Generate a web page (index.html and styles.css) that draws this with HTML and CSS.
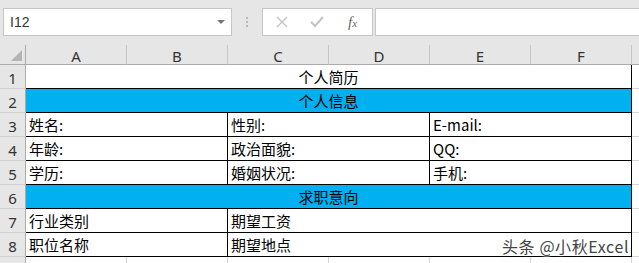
FILE: index.html
```html
<!DOCTYPE html>
<html lang="zh-CN">
<head>
    <meta charset="UTF-8">
    <meta name="viewport" content="width=device-width, initial-scale=1.0">
    <title>个人简历</title>
    <link rel="stylesheet" href="styles.css">
</head>
<body>
    <div class="toolbar">
        <div class="name-box">
            <span>I12</span>
            <span class="drop"></span>
        </div>
        <div class="grip">
            <svg width="3" height="11" viewBox="0 0 3 11"><rect x="0" y="0" width="2" height="2" fill="#b8b8b8"/><rect x="0" y="4" width="2" height="2" fill="#b8b8b8"/><rect x="0" y="8" width="2" height="2" fill="#b8b8b8"/></svg>
        </div>
        <div class="fx-buttons">
            <svg class="btn-icon" width="12" height="12" viewBox="0 0 12 12"><path d="M1 1 L11 11 M11 1 L1 11" stroke="#c4c4c4" stroke-width="1.4" fill="none"/></svg>
            <svg class="btn-icon" width="14" height="12" viewBox="0 0 14 12"><path d="M1 6 L5 10 L13 1" stroke="#c4c4c4" stroke-width="2.2" fill="none"/></svg>
            <span class="fx">f<sub>x</sub></span>
        </div>
        <div class="formula"></div>
    </div>

    <div class="sheet">
        <!-- column headers -->
        <div class="corner"><span class="tri"></span></div>
        <div class="col-head">A</div>
        <div class="col-head">B</div>
        <div class="col-head">C</div>
        <div class="col-head">D</div>
        <div class="col-head">E</div>
        <div class="col-head">F</div>
        <div class="col-head rest"></div>

        <div class="row-head">1</div>
        <div class="cell title span6">个人简历</div>
        <div class="cell rest"></div>

        <div class="row-head">2</div>
        <div class="cell band span6">个人信息</div>
        <div class="cell rest"></div>

        <div class="row-head">3</div>
        <div class="cell box span2">姓名:</div>
        <div class="cell box span2">性别:</div>
        <div class="cell box span2">E-mail:</div>
        <div class="cell rest"></div>

        <div class="row-head">4</div>
        <div class="cell box span2">年龄:</div>
        <div class="cell box span2">政治面貌:</div>
        <div class="cell box span2">QQ:</div>
        <div class="cell rest"></div>

        <div class="row-head">5</div>
        <div class="cell box span2">学历:</div>
        <div class="cell box span2">婚姻状况:</div>
        <div class="cell box span2">手机:</div>
        <div class="cell rest"></div>

        <div class="row-head">6</div>
        <div class="cell band span6">求职意向</div>
        <div class="cell rest"></div>

        <div class="row-head">7</div>
        <div class="cell box span2">行业类别</div>
        <div class="cell box span4">期望工资</div>
        <div class="cell rest"></div>

        <div class="row-head">8</div>
        <div class="cell box span2">职位名称</div>
        <div class="cell box span4">期望地点</div>
        <div class="cell rest"></div>

        <div class="row-head last">9</div>
        <div class="cell"></div>
        <div class="cell"></div>
        <div class="cell"></div>
        <div class="cell"></div>
        <div class="cell"></div>
        <div class="cell"></div>
        <div class="cell rest"></div>

        <div class="watermark">头条 @小秋Excel</div>
    </div>
</body>
</html>
```

FILE: styles.css
```css
body {
    margin: 0;
    background-color: #e6e6e6;
    font-family: "Noto Sans CJK SC", "Noto Sans", sans-serif;
    overflow: hidden;
}

/* Formula bar */
.toolbar {
    display: flex;
    height: 45px;
    padding: 8px 0 0 3px;
    box-sizing: border-box;
}
.name-box {
    width: 229px;
    height: 28px;
    box-sizing: border-box;
    background-color: #fff;
    border: 1px solid #c6c6c6;
    display: flex;
    align-items: center;
    justify-content: space-between;
    padding: 0 6px 0 6px;
    font-family: "Liberation Sans", sans-serif;
    font-size: 14px;
    color: #333;
}
.drop {
    width: 0;
    height: 0;
    border-left: 4px solid transparent;
    border-right: 4px solid transparent;
    border-top: 4px solid #777;
}
.grip {
    width: 30px;
    height: 28px;
    display: flex;
    align-items: center;
    justify-content: center;
}
.fx-buttons {
    width: 111px;
    height: 28px;
    box-sizing: border-box;
    background-color: #fff;
    border: 1px solid #c6c6c6;
    display: flex;
    align-items: center;
    gap: 22px;
    padding-left: 13px;
}
.fx {
    font-family: "Liberation Serif", serif;
    font-style: italic;
    font-size: 15px;
    color: #666;
    margin-left: 2px;
}
.fx sub {
    font-size: 11px;
    vertical-align: 0;
}
.formula {
    flex: 1;
    height: 28px;
    margin-left: 2px;
    box-sizing: border-box;
    background-color: #fff;
    border: 1px solid #c6c6c6;
    border-right: none;
}

/* Worksheet */
.sheet {
    position: relative;
    display: grid;
    grid-template-columns: 26px repeat(6, 101px) 1fr;
    grid-template-rows: 20px repeat(8, 24px) 7px;
    background-color: #fff;
    overflow: hidden;
}
.sheet > div {
    box-sizing: border-box;
}
.corner {
    background-color: #e6e6e6;
    border-right: 1px solid #ababab;
    border-bottom: 1px solid #ababab;
    position: relative;
}
.tri {
    position: absolute;
    right: 3px;
    bottom: 3px;
    width: 0;
    height: 0;
    border-left: 11px solid transparent;
    border-bottom: 11px solid #b4b4b4;
}
.col-head {
    background-color: #e6e6e6;
    border-right: 1px solid #c6c6c6;
    border-bottom: 1px solid #ababab;
    text-align: center;
    font-family: "Noto Sans", sans-serif;
    font-size: 15px;
    line-height: 23px;
    color: #333;
}
.col-head.rest {
    border-right: none;
}
.row-head {
    background-color: #e6e6e6;
    border-right: 1px solid #ababab;
    border-bottom: 1px solid #d0d0d0;
    text-align: center;
    font-family: "Noto Sans", sans-serif;
    font-size: 15px;
    line-height: 27px;
    color: #333;
}
.row-head.last {
    border-bottom: none;
}
.cell {
    border-right: 1px solid #d4d4d4;
    border-bottom: 1px solid #d4d4d4;
    font-size: 15px;
    line-height: 23px;
    padding-left: 3px;
    color: #000;
    white-space: nowrap;
}
.cell.rest {
    border-right: none;
}
.span2 { grid-column: span 2; }
.span4 { grid-column: span 4; }
.span6 { grid-column: span 6; }

.title,
.band {
    text-align: center;
    padding-left: 0;
    border-right-color: #000;
    border-bottom-color: #000;
}
.band {
    background-color: #00b0f0;
}
.box {
    border-right-color: #000;
    border-bottom-color: #000;
}

.watermark {
    position: absolute;
    left: 502px;
    top: 189px;
    font-size: 16px;
    color: #444;
    letter-spacing: 0.6px;
    text-shadow: 0 0 2px #fff, 0 0 2px #fff, 0 0 1px #fff;
    white-space: nowrap;
}
```
